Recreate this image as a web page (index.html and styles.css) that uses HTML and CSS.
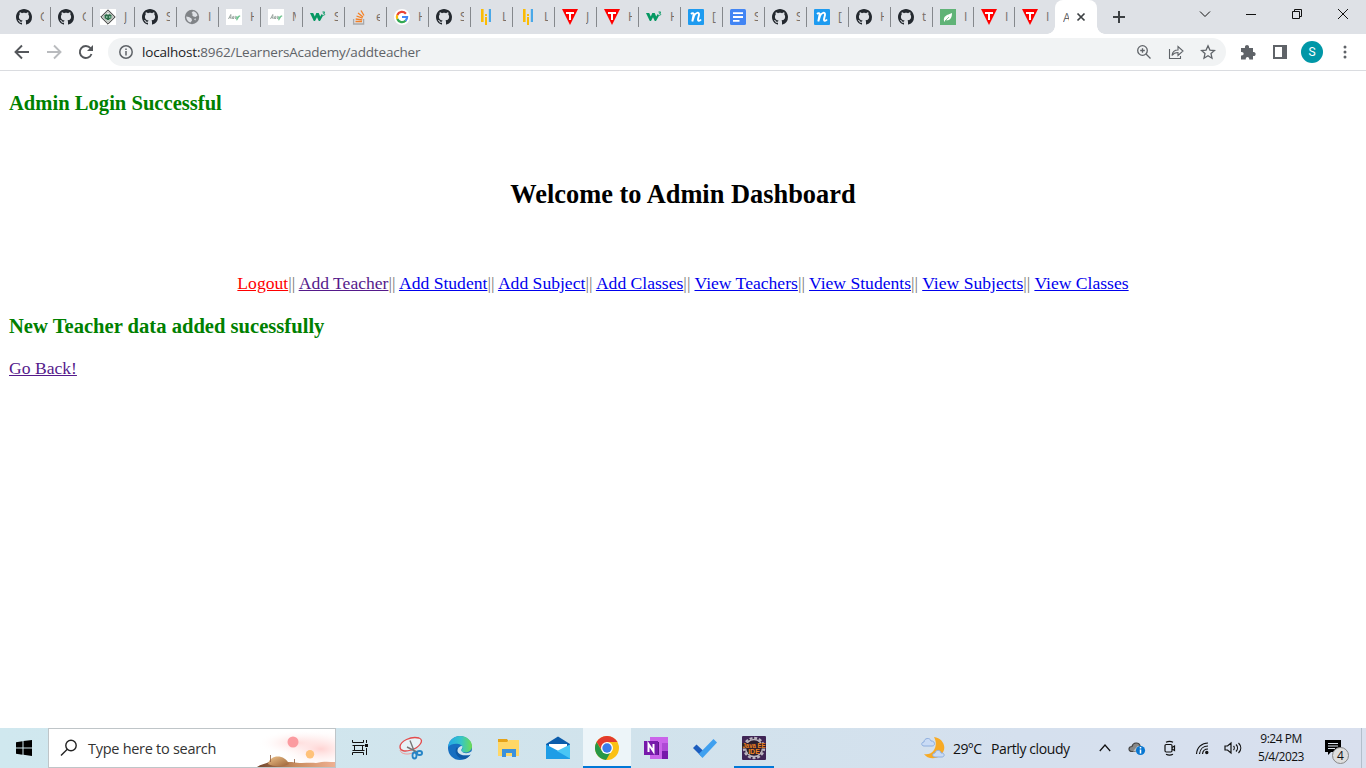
FILE: index.html
```html
<!DOCTYPE html>
<html lang="en">
<head>
<meta charset="utf-8">
<title>Admin Dashboard</title>
<link rel="stylesheet" href="styles.css">
</head>
<body>
<svg class="defs" aria-hidden="true">
  <symbol id="github" viewBox="0 0 16 16"><path fill="#24292f" d="M8 0C3.58 0 0 3.58 0 8c0 3.54 2.29 6.53 5.47 7.59.4.07.55-.17.55-.38 0-.19-.01-.82-.01-1.49-2.01.37-2.53-.49-2.69-.94-.09-.23-.48-.94-.82-1.13-.28-.15-.68-.52-.01-.53.63-.01 1.08.58 1.23.82.72 1.21 1.87.87 2.33.66.07-.52.28-.87.51-1.07-1.78-.2-3.64-.89-3.64-3.95 0-.87.31-1.59.82-2.15-.08-.2-.36-1.02.08-2.12 0 0 .67-.21 2.2.82.64-.18 1.32-.27 2-.27s1.36.09 2 .27c1.53-1.04 2.2-.82 2.2-.82.44 1.1.16 1.92.08 2.12.51.56.82 1.27.82 2.15 0 3.07-1.87 3.75-3.65 3.95.29.25.54.73.54 1.48 0 1.07-.01 1.93-.01 2.2 0 .21.15.46.55.38A8.01 8.01 0 0 0 16 8c0-4.42-3.58-8-8-8z"/></symbol>
  <symbol id="diamond" viewBox="0 0 16 16"><path fill="#fff" d="M0 0h16v16H0z"/><path fill="#e8eee9" stroke="#333" d="M8 .8 15.2 8 8 15.2.8 8z"/><path fill="none" stroke="#777" stroke-width=".7" d="M8 2.5 13.5 8 8 13.5 2.500 8z"/><path fill="#2c6e49" d="M4.500 6 7 5l1 1 1-1 2.500 1v3L8 11.500 4.500 9z"/><path stroke="#dfe" d="M6 8h1.500M9 8h1.500"/></symbol>
  <symbol id="globe" viewBox="0 0 16 16"><circle cx="8" cy="8" r="7.200" fill="#808387"/><path fill="#dee1e6" d="M9 2.200c2.500.3 4 2 4.500 4.300L11.500 8 9.500 7.500 8 6 9 5 7.500 4zM2.200 7.500 5 8l2.500 1.500.5 2-1.500 2C3.800 12.800 2.300 10.500 2.200 7.500zM10 10l2-.5-.7 2z"/></symbol>
  <symbol id="script" viewBox="0 0 16 16"><path fill="#fff" d="M0 0h16v16H0z"/><g fill="none" stroke-linejoin="round"><path stroke="#9aa5a0" d="M2.500 10 4.800 5.500 5 10M3.300 8.500h1.500M6.200 10l.8-2.800M6.800 8c.8-1 1.300-.8 1 .2L7.400 10M8.700 8c.8-1 1.300-.8 1 .2L9.300 10"/><path stroke="#6fc390" stroke-width="1.200" d="M10.800 7.200v2.300l2.200-2.300-2.500 4M13 7.200h1.200"/></g></symbol>
  <symbol id="w3" viewBox="0 0 16 16"><path fill="#059862" d="M0 4h3.200l1.600 3.600L6.300 4h2.400l1.500 3.600L11.700 5l1.300 1.800-3 5.200H8.800L7 8.300 5 12H3.800z"/><path fill="none" stroke="#059862" d="M12.500 3h2.200l-1.200 1.400c2.200 0 1.400 2.400-1 1.800"/></symbol>
  <symbol id="stack" viewBox="0 0 16 16"><path fill="none" stroke="#a9a9aa" stroke-width="1.300" d="M1.600 10v5h10v-5"/><path stroke="#f48024" stroke-width="1.300" d="M3.500 12.500H10M3.700 10l6.500.8M4.500 7l6 2.200M6 4l5 4M9 1.500l3 5"/></symbol>
  <symbol id="google" viewBox="0 0 16 16"><circle cx="8" cy="8" r="8" fill="#fff"/><g fill="none" stroke-width="2.200"><path stroke="#ea4335" d="M3.300 6A5.100 5.100 0 0 1 11.900 4.700"/><path stroke="#fbbc05" d="M3.300 10a5.100 5.100 0 0 1 0-4"/><path stroke="#34a853" d="M3.300 10a5.100 5.100 0 0 0 8.400 1.600"/><path stroke="#4285f4" d="M8 8h5.100c0 1.500-.5 2.700-1.500 3.700"/></g></symbol>
  <symbol id="bars" viewBox="0 0 16 16"><path fill="#fbbc05" d="M3 0h2.600v13H3zM7 5h2v2H7zM7 8h2v8H7z"/><path fill="#4aa8e8" d="M10.800 0h2.200v13h-2.200z"/></symbol>
  <symbol id="tri" viewBox="0 0 16 16"><path fill="#f00" d="M0 0h16L8 16z"/><path fill="#fff" d="M4 3h8v2H9v6H7V5H4z"/></symbol>
  <symbol id="nn" viewBox="0 0 16 16"><rect width="16" height="16" rx="1" fill="#1e9bf0"/><path fill="none" stroke="#fff" stroke-width="1.900" d="M3 5c1.500-1.500 3-1 2.500 1L4.300 12.500 6 7c1.500-3.500 5.400-4.500 5-1l-1 4c-.3 2.300 1.500 2.300 3 .5"/></symbol>
  <symbol id="docs" viewBox="0 0 16 16"><rect width="16" height="16" rx="1.500" fill="#4285f4"/><path stroke="#fff" stroke-width="1.800" d="M3 4.200h10M3 8h10M3 11.800h6.500"/></symbol>
  <symbol id="leaf" viewBox="0 0 16 16"><path fill="#60b377" d="M0 0h16v16H0z"/><path fill="#fff" d="M4 12C3 7 7 6 12 4c0 5-2 8-6.500 7.200L4 13z"/><path stroke="#60b377" stroke-width=".7" d="m5 12 4-4"/></symbol>
</svg>

<header class="browser">
  <div class="tabstrip">
    <div class="tab"><svg><use href="#github"/></svg><span>G</span></div>
    <div class="tab"><svg><use href="#github"/></svg><span>G</span></div>
    <div class="tab"><svg><use href="#diamond"/></svg><span>J</span></div>
    <div class="tab"><svg><use href="#github"/></svg><span>S</span></div>
    <div class="tab"><svg><use href="#globe"/></svg><span>I</span></div>
    <div class="tab"><svg><use href="#script"/></svg><span>H</span></div>
    <div class="tab"><svg><use href="#script"/></svg><span>M</span></div>
    <div class="tab"><svg><use href="#w3"/></svg><span>S</span></div>
    <div class="tab"><svg><use href="#stack"/></svg><span>e</span></div>
    <div class="tab"><svg><use href="#google"/></svg><span>H</span></div>
    <div class="tab"><svg><use href="#github"/></svg><span>S</span></div>
    <div class="tab"><svg><use href="#bars"/></svg><span>L</span></div>
    <div class="tab"><svg><use href="#bars"/></svg><span>L</span></div>
    <div class="tab"><svg><use href="#tri"/></svg><span>J</span></div>
    <div class="tab"><svg><use href="#tri"/></svg><span>H</span></div>
    <div class="tab"><svg><use href="#w3"/></svg><span>H</span></div>
    <div class="tab"><svg><use href="#nn"/></svg><span>[</span></div>
    <div class="tab"><svg><use href="#docs"/></svg><span>S</span></div>
    <div class="tab"><svg><use href="#github"/></svg><span>S</span></div>
    <div class="tab"><svg><use href="#nn"/></svg><span>[</span></div>
    <div class="tab"><svg><use href="#github"/></svg><span>H</span></div>
    <div class="tab"><svg><use href="#github"/></svg><span>t</span></div>
    <div class="tab narrow"><svg><use href="#leaf"/></svg><span>I</span></div>
    <div class="tab narrow"><svg><use href="#tri"/></svg><span>I</span></div>
    <div class="tab last"><svg><use href="#tri"/></svg><span>I</span></div>
    <div class="tab-active"><span>A</span><svg viewBox="0 0 10 10"><path d="m1.500 1.500 7 7M8.500 1.500l-7 7"/></svg></div>
    <svg class="newtab" viewBox="0 0 12 12"><path d="M6 0v12M0 6h12"/></svg>
    <div class="winctl">
      <svg viewBox="0 0 12 12"><path d="m1 3.500 5 5 5-5"/></svg>
      <svg viewBox="0 0 12 12"><path d="M1 6.500h10"/></svg>
      <svg viewBox="0 0 12 12"><path d="M1.500 3.500h7v7h-7zM3.500 3.500v-2h7v7h-2"/></svg>
      <svg viewBox="0 0 12 12"><path d="m1 1 10 10M11 1 1 11"/></svg>
    </div>
  </div>
  <div class="toolbar">
    <svg class="back" viewBox="0 0 16 16"><path d="M15 8H2M8 1.500 1.500 8 8 14.500"/></svg>
    <svg class="fwd" viewBox="0 0 16 16"><path d="M1 8h13M8 1.500 14.500 8 8 14.500"/></svg>
    <svg class="reload" viewBox="0 0 16 16"><path d="M13.500 10A6 6 0 1 1 12.500 4.200"/><path class="solid" d="M15 1v6H9z"/></svg>
    <div class="omnibox">
      <svg class="info" viewBox="0 0 14 14"><circle cx="7" cy="7" r="6.200"/><path d="M7 6v4.500M7 3.500V5"/></svg>
      <span class="url"><b>localhost:</b>8962/LearnersAcademy/addteacher</span>
      <svg class="obicon" viewBox="0 0 16 16"><circle cx="6.500" cy="6.500" r="4.800"/><path d="m10 10 4.500 4.500M4.200 6.500h4.600M6.500 4.200v4.600"/></svg>
      <svg class="obicon share" viewBox="0 0 16 16"><path d="M1.500 5v9.500h11V12M4 11.500c.5-4 2.500-5.500 6-5.500V2.500L15 7l-5 4.500V8.500c-3 0-4.500.8-6 3z"/></svg>
      <svg class="obicon" viewBox="0 0 16 16"><path d="m8 1.800 1.900 4.300 4.600.4-3.500 3.100 1 4.600L8 11.800l-4 2.400 1-4.600-3.500-3.100 4.600-.4z"/></svg>
    </div>
    <svg class="puzzle" viewBox="0 0 16 16"><path d="M1 4h4c-.8-4 4.800-4 4 0h4v4c3.500-.8 3.500 4.800 0 4v3.500H9.200c.6-3.500-4-3.500-3.400 0H1v-4c3.500.6 3.500-4 0-3.400z"/></svg>
    <svg class="panel" viewBox="0 0 14 14"><path d="M0 0h14v14H0zM2 2v10h7V2z" fill-rule="evenodd"/></svg>
    <span class="avatar">S</span>
    <svg class="dots" viewBox="0 0 4 14"><circle cx="2" cy="2" r="1.500"/><circle cx="2" cy="7" r="1.500"/><circle cx="2" cy="12" r="1.500"/></svg>
  </div>
</header>

<main>
  <h3>Admin Login Successful</h3>
  <h2>Welcome to Admin Dashboard</h2>
  <nav><a class="logout" href="#">Logout</a>|| <a class="visited" href="#">Add Teacher</a>|| <a href="#">Add Student</a>|| <a href="#">Add Subject</a>|| <a href="#">Add Classes</a>|| <a href="#">View Teachers</a>|| <a href="#">View Students</a>|| <a href="#">View Subjects</a>|| <a href="#">View Classes</a></nav>
  <h3 class="message">New Teacher data added sucessfully</h3>
  <a class="visited" href="#">Go Back!</a>
</main>

<footer class="taskbar">
  <div class="start"><svg viewBox="0 0 16 16"><path d="M0 2.300 6.500 1.300v6.200H0zM7.500 1.100 16 0v7.500H7.500zM0 8.500h6.500v6.200L0 13.800zM7.500 8.500H16V16l-8.500-1.200z"/></svg></div>
  <div class="search">
    <svg class="glass" viewBox="0 0 18 18"><circle cx="11" cy="6.500" r="5.200"/><path d="M7.300 10.200 1 16.500"/></svg>
    <span>Type here to search</span>
    <svg class="scene" viewBox="0 0 80 38">
      <defs><radialGradient id="sky"><stop offset="0" stop-color="#ffd3d2"/><stop offset="1" stop-color="#fff" stop-opacity="0"/></radialGradient><linearGradient id="sand" x2="1"><stop stop-color="#70452c"/><stop offset=".5" stop-color="#c98c5e"/><stop offset="1" stop-color="#efb092"/></linearGradient><linearGradient id="dome" x2="1" y2="1"><stop stop-color="#efc38a"/><stop offset="1" stop-color="#9b6238"/></linearGradient></defs>
      <ellipse cx="44" cy="14" rx="42" ry="13" fill="url(#sky)"/><ellipse cx="66" cy="20" rx="44" ry="20" fill="url(#sky)"/>
      <circle cx="38" cy="13" r="5.500" fill="#fb9ba0"/><circle cx="55" cy="25.200" r="4.200" fill="#ffc27a"/>
      <path fill="url(#sand)" d="M2 38c4-3 8-3 12-5h23c10 2 16 0 24 1 8-2 14-1 19-1v5z"/><path fill="url(#dome)" d="M13 35c2-10 17-10 21 0-6 3-15 3-21 0z"/><path stroke="#8b5a3c" stroke-width=".8" d="M15.500 26v7M39.500 30v4"/>
    </svg>
  </div>
  <div class="app task"><svg viewBox="0 0 18 18"><path d="M3.500 6.500h8v5h-8zM1.500 1v2.500h11V1M1.500 6.500h12M1.500 11.500h12M1.500 16v-2.500h11V16M15.500 1v3M15.500 9v7"/><path class="solid" d="M14 5h3v3h-3z"/></svg></div>
  <div class="app"><svg viewBox="0 0 24 24"><path fill="#fff" fill-opacity=".5" stroke="#e34b4c" stroke-width="1.300" d="M1 11C1 5 12 0 20 2c6 2 0 10-8 12-6 2-11 1-11-3z"/><path fill="none" stroke="#f19a98" d="M1 14c1 5 10 5 14 2"/><path stroke="#777" stroke-width="1.400" d="M11 4.500 15.500 16M8 11l10 5"/><g fill="none" stroke="#2684c6" stroke-width="1.800"><ellipse cx="15.500" cy="19.500" rx="2" ry="3"/><ellipse cx="20.500" cy="17" rx="2.600" ry="2"/></g></svg></div>
  <div class="app"><svg viewBox="0 0 24 24"><defs><linearGradient id="edgeTop" x2="1"><stop stop-color="#24a8e8"/><stop offset=".55" stop-color="#37c5c7"/><stop offset="1" stop-color="#6cdd50"/></linearGradient></defs><circle cx="12" cy="12" r="12" fill="#176fc1"/><path fill="url(#edgeTop)" d="M0 11C1 4 6 0 12 0c7 0 12 5 12 10 0 4-3 6.500-6.500 6.500-3 0-4-1-4-2 0-.8 1-1 1-3C14.500 7 4 6 0 11z"/><path fill="#0f5aa5" d="M9 11c-4 5 1 13 8 12 2-.5 5-3 6-5-6 3-14 1-13-5z"/><path fill="#d1e5ee" d="M14 10c1.500 2-1.500 3-.5 5 2 3 7 2.500 9.500.5h1.500l-1.500 3c-5 2-14 .5-13.500-4.500.2-2 2.500-4 4.500-4z"/></svg></div>
  <div class="app"><svg viewBox="0 0 24 24"><path fill="#e6a317" d="M1 3h9l2 3v2H1z"/><path fill="#ffd766" d="M1 6h9l2-2h10v16H1z"/><path fill="#3b91dc" d="M5 13h14v8h-4v-4H9v4H5z"/></svg></div>
  <div class="app"><svg viewBox="0 0 24 24"><path fill="#0b5cab" d="M0 8 12 .5 24 8v7H0z"/><path fill="#fff" d="M3 8h18v5l-9 4-9-5z"/><path fill="#1e9de6" d="M0 8.500 24 21v2H0z"/><path fill="#49c6f5" d="M24 8.500v14L11 15z"/></svg></div>
  <div class="app active"><svg viewBox="0 0 24 24"><circle cx="12" cy="12" r="12" fill="#fbc116"/><path fill="#e33b2e" d="M1.600 6a12 12 0 0 1 20.800 0H12l-5 8.500z"/><path fill="#279847" d="M1.600 6a12 12 0 0 0 9.400 18l5.500-9.300-9.700 0z"/><circle cx="12" cy="12" r="6" fill="#fff"/><circle cx="12" cy="12" r="4.700" fill="#3a7cec"/></svg></div>
  <div class="app"><svg viewBox="0 0 24 24"><path fill="#ca64ea" d="M6 1h18v22H6z"/><path fill="#ae4bd5" d="M18 7h6v8h-6z"/><path fill="#7719aa" d="M18 15h6v8h-6z"/><path fill="#5c1687" d="M6 6h9v13H6z"/><path fill="#7719aa" d="M0 5h14v14H0z"/><path fill="none" stroke="#fff" stroke-width="2" d="M4.500 16V8l5 7.500V8"/></svg></div>
  <div class="app"><svg viewBox="0 0 24 24"><path fill="#1b5dbe" d="m0 12 3.500-3.500 8 7.500-3 4.500z"/><path fill="#3fa0ef" d="M20.500 3 24 6.500 9.500 22 5.800 18z"/></svg></div>
  <div class="app running"><svg viewBox="0 0 24 24"><rect width="24" height="24" rx="1" fill="#3f2555"/><circle cx="12" cy="12" r="10" fill="#271b2c" stroke="#bbb4c0" stroke-width="2.400" stroke-dasharray="3 1.700"/><circle cx="12" cy="12" r="8.500" fill="none" stroke="#bbb4c0" stroke-width="1.500"/><path fill="#30212d" d="M0 7h24v5.500H0zM6 12h12v6H6z"/><text x="12" y="12" textLength="23" lengthAdjust="spacingAndGlyphs">Java EE</text><text x="12" y="18">IDE</text></svg></div>
  <div class="weather">
    <svg viewBox="0 0 24 24"><path fill="#f7aa26" d="M13 1c9 1 14 11 7 18-5 5-14 4-17-1 9 2 15-8 10-17z"/><path fill="#c9dbf5" stroke="#8eaede" d="M3 10c-3 0-3-4 0-4 0-4 6-5 7-1 4-.5 5 5 1 5zM14 21c-3 0-3-4 0-4 1-4 6-3 6 0 4-.5 4 4 1 4z"/></svg>
    <span class="temp">29°C</span><span class="cond">Partly cloudy</span>
  </div>
  <div class="tray">
    <svg class="chev" viewBox="0 0 12 12"><path d="m.8 9 5.200-6 5.200 6"/></svg>
    <svg class="cloud" viewBox="0 0 18 16"><path fill="#888" stroke="#444" d="M4 11.500C0 11.500 0 6.500 4 6.500c1-4.500 7-4.500 8-1l-5 6z"/><path fill="#c4c4c4" d="m5 11.500 4-5c3-2 7 0 7 2.500l-2 2.500z"/><circle cx="12.500" cy="10.500" r="4.600" fill="#0877d2"/><path stroke="#fff" stroke-width="1.500" d="M12.500 9.500v4M12.500 7v1.500"/></svg>
    <svg class="cam" viewBox="0 0 14 16"><rect x="2" y="4.500" width="7" height="7.500" rx="1.200"/><path d="m9 7.500 2.500-1.500v4.500L9 9M3 2.200c2-1 5-1 7 0M3 14.300c2 1 5 1 7 0"/></svg>
    <svg class="wifi" viewBox="0 0 16 16"><path d="M1.500 14C2 7 7 3 13 3M4.500 14C5 9 8.500 6 13 6M7.500 14c.3-3 2.500-5 5.500-5"/><circle cx="11.800" cy="12.500" r="1.100" fill="#111"/></svg>
    <svg class="sound" viewBox="0 0 18 14"><path d="M1 5v4h2.500L7 12V2L3.500 5zM9.500 5c1 1 1 3 0 4M12 3.500c2 2 2 5 0 7M14.500 2c3 3 3 7 0 10"/></svg>
    <div class="clock"><span>9:24 PM</span><span>5/4/2023</span></div>
    <div class="notice"><svg viewBox="0 0 16 16"><path d="M0 0h16v12H6l-3 3v-3H0z"/><path class="lines" d="M3 3.500h10M3 6h10M3 8.500h7"/></svg><span>4</span></div>
  </div>
</footer>
</body>
</html>
```
FILE: styles.css
```css
* { box-sizing: border-box; }
body { margin: 0; height: 768px; display: flex; flex-direction: column; overflow: hidden; background: #fff; font-family: "Open Sans", sans-serif; }
svg { display: block; flex: none; }
.defs { position: absolute; width: 0; height: 0; }

.browser { flex: none; }
.tabstrip { height: 34px; background: #dee1e6; display: flex; align-items: center; padding-left: 15px; }
.tab { flex: none; width: 42px; height: 20px; display: flex; align-items: center; position: relative; }
.tab.narrow { width: 41px; }
.tab svg { width: 16px; height: 16px; margin-left: 1px; }
.tab span { margin-left: 8px; width: 4px; overflow: hidden; font-size: 12px; line-height: 16px; color: #776e69; }
.tab::after { content: ""; position: absolute; left: 35px; top: 0; width: 1px; height: 20px; background: #85888c; }
.tab.narrow::after { left: 34px; }
.tab.last { width: 35px; }
.tab.last::after { display: none; }
.tab-active { flex: none; align-self: flex-end; width: 42px; height: 34px; background: #fff; border-radius: 8px 8px 0 0; display: flex; align-items: center; padding-left: 8px; position: relative; margin-left: -1px; }
.tab-active::before, .tab-active::after { content: ""; position: absolute; bottom: 0; width: 8px; height: 8px; }
.tab-active::before { left: -8px; background: radial-gradient(circle at 0 0, transparent 7.5px, #fff 8px); }
.tab-active::after { right: -8px; background: radial-gradient(circle at 100% 0, transparent 7.5px, #fff 8px); }
.tab-active span { width: 6px; overflow: hidden; font-size: 12px; color: #5f6368; }
.tab-active svg { width: 10px; height: 10px; margin-left: 7px; fill: none; stroke: #3c4043; stroke-width: 1.7; }
.newtab { width: 12px; height: 12px; margin-left: 16px; fill: none; stroke: #3c4043; stroke-width: 2; }
.winctl { margin-left: auto; display: flex; gap: 34px; padding-right: 17px; margin-top: -6px; }
.winctl svg { width: 12px; height: 12px; fill: none; stroke: #111; stroke-width: 1; }

.toolbar { height: 37px; border-bottom: 1px solid #dadce0; display: flex; align-items: center; padding-left: 14px; }
.back, .fwd, .reload { width: 16px; height: 16px; fill: none; stroke: #54575b; stroke-width: 1.9; }
.fwd { margin-left: 16px; stroke: #b9bbbe; }
.reload { margin-left: 16px; }
.reload .solid { fill: #54575b; stroke: none; }
.omnibox { flex: none; width: 1118px; height: 28px; margin-left: 14px; border-radius: 14px; background: #f1f3f4; display: flex; align-items: center; padding: 0 10px 0 11px; }
.info { width: 14px; height: 14px; fill: none; stroke: #5f6368; stroke-width: 1.5; }
.url { margin: 0 auto 0 9px; font-size: 13.5px; letter-spacing: -.18px; color: #5f6368; white-space: nowrap; }
.url b { font-weight: 400; color: #202124; }
.obicon { width: 16px; height: 16px; margin-left: 16px; fill: none; stroke: #5f6368; stroke-width: 1.3; }
.share { stroke-width: 1.1; }
.puzzle { width: 16px; height: 16px; margin-left: 14px; fill: #5f6368; }
.panel { width: 14px; height: 14px; margin-left: 17px; fill: #5f6368; }
.avatar { width: 22px; height: 22px; margin-left: 14px; border-radius: 50%; background: #0097a7; color: #fff; font: 12px/22px Roboto, sans-serif; text-align: center; }
.dots { width: 4px; height: 14px; margin-left: 20px; fill: #5f6368; }

main { flex: 1; padding: 21px 9px 0; font-family: "Liberation Serif", "Times New Roman", serif; font-size: 17.6px; line-height: 20px; }
h2, h3 { margin: 0; font-weight: 700; }
h3 { font-size: 20.6px; line-height: 23px; color: green; }
h2 { margin-top: 64px; font-size: 26.4px; line-height: 30px; text-align: center; }
nav { margin-top: 64px; text-align: center; color: #777; }
a { color: #00e; text-decoration: underline; }
.visited { color: #551a8b; }
.logout { color: red; }
.message { margin: 22px 0 20px; }

.taskbar { flex: none; height: 40px; display: flex; align-items: stretch; background: linear-gradient(90deg, #d0e8ef, #d1e3ec 45%, #d5e0ee 75%, #d9e0ee); color: #111; }
.start { width: 48px; display: grid; place-items: center; }
.start svg { width: 16px; height: 16px; }
.search { width: 288px; background: #fff; border: 1px solid #bfc5c8; display: flex; align-items: center; }
.glass { width: 18px; height: 18px; margin-left: 11px; fill: none; stroke: #222; stroke-width: 1.4; }
.search span { margin-left: 10px; font-size: 14.5px; letter-spacing: -.28px; white-space: nowrap; color: #333; }
.scene { width: 80px; height: 38px; margin-left: auto; }
.app { width: 48px; display: grid; place-items: center; margin-right: 1px; }
.app svg { width: 24px; height: 24px; }
.app.task { margin-right: 3px; }
.app.task svg { width: 18px; height: 18px; fill: none; stroke: #111; stroke-width: 1; }
.app.task .solid { fill: #111; stroke: none; }
.app.active { background: #edf5f9; box-shadow: inset 0 -2px #0078d7; }
.app.running { width: 40px; margin-left: 4px; box-shadow: inset 0 -2px #0078d7; }
.app text { font: 700 7px "Liberation Sans", sans-serif; fill: #ef8321; text-anchor: middle; }
.weather { margin-left: 146px; display: flex; align-items: center; font-size: 14px; white-space: nowrap; }
.weather svg { width: 24px; height: 24px; }
.temp { margin-left: 8px; width: 38px; letter-spacing: -.6px; }
.cond { letter-spacing: -.4px; }
.tray { margin-left: auto; display: flex; align-items: center; border-right: 1px solid #b3bfcb; margin-right: 4px; }
.tray > svg { fill: none; stroke: #111; stroke-width: 1.2; }
.chev { width: 12px; height: 12px; }
.tray .cloud { width: 18px; height: 16px; margin-left: 17px; stroke: none; }
.cam { width: 14px; height: 16px; margin-left: 17px; }
.wifi { width: 16px; height: 16px; margin-left: 18px; }
.sound { width: 18px; height: 14px; margin-left: 13px; }
.clock { width: 56px; margin-left: 11px; display: flex; flex-direction: column; align-items: center; font-size: 12px; line-height: 18px; letter-spacing: -.5px; white-space: nowrap; }
.notice { position: relative; width: 37px; height: 40px; margin-left: 15px; padding: 12px 0 0 1px; }
.notice svg { width: 16px; height: 16px; }
.notice .lines { stroke: #dce4ed; stroke-width: 1; }
.notice span { position: absolute; left: 8px; top: 19px; width: 17px; height: 17px; border: 1px solid #888; border-radius: 50%; background: #dedede; font-size: 12px; line-height: 15px; text-align: center; }
```
